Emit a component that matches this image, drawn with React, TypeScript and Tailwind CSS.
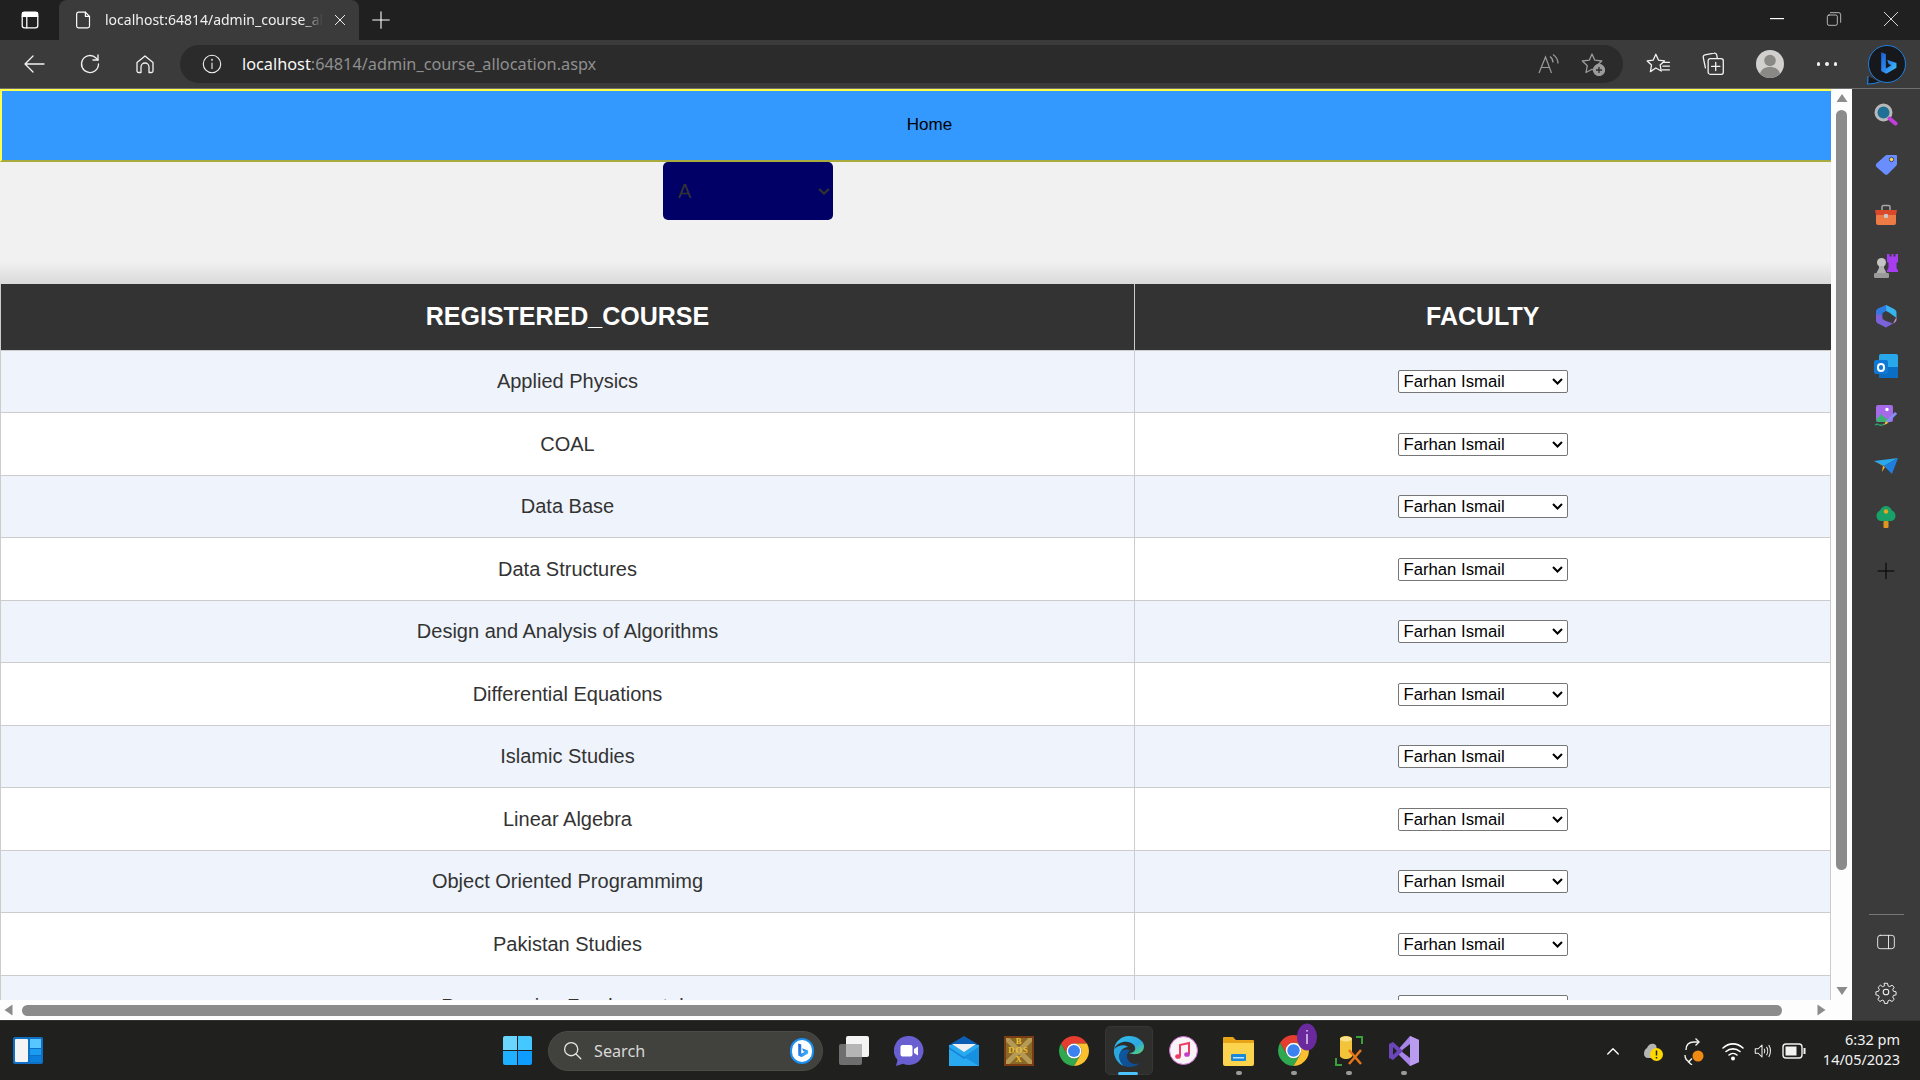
import React from "react";

const UI = "font-['Noto_Sans','Open_Sans',sans-serif]";
const ARIAL = "font-['Liberation_Sans',Arial,sans-serif]";

const courses = [
  "Applied Physics",
  "COAL",
  "Data Base",
  "Data Structures",
  "Design and Analysis of Algorithms",
  "Differential Equations",
  "Islamic Studies",
  "Linear Algebra",
  "Object Oriented Programmimg",
  "Pakistan Studies",
  "Programming Fundamentals",
];

function Line({ size = 24, sw = 1.3, className = "", children }: { size?: number; sw?: number; className?: string; children: React.ReactNode }) {
  return (
    <svg width={size} height={size} viewBox="0 0 24 24" fill="none" stroke="currentColor" strokeWidth={sw} strokeLinecap="round" strokeLinejoin="round" className={className}>
      {children}
    </svg>
  );
}

function BingB({ id, size = 24 }: { id: string; size?: number }) {
  return (
    <svg width={size} height={size} viewBox="0 0 24 24">
      <defs>
        <linearGradient id={id} x1="0" y1="0" x2="1" y2="1">
          <stop offset="0" stopColor="#1b5fd8" />
          <stop offset="0.55" stopColor="#2f8cf0" />
          <stop offset="1" stopColor="#3fd0f8" />
        </linearGradient>
      </defs>
      <path d="M7 2l4 1.400v12.400l4.800-2.700-2.300-1.100-1.400-3.600 8 2.800v4l-8.700 5.200-4.400-2.500z" fill={`url(#${id})`} />
    </svg>
  );
}

function ChromeLogo({ size = 30 }: { size?: number }) {
  return (
    <svg width={size} height={size} viewBox="4 4 40 40">
      <path d="M6.68 14A20 20 0 0 1 41.32 14H24A10 10 0 0 0 15.34 29z" fill="#e53e30" />
      <path d="M6.68 14L15.34 29A10 10 0 0 0 32.66 29L24 44A20 20 0 0 1 6.68 14z" fill="#2fa84f" />
      <path d="M24 44L32.66 29A10 10 0 0 0 24 14H41.32A20 20 0 0 1 24 44z" fill="#fbc02d" />
      <circle cx="24" cy="24" r="10" fill="#fff" />
      <circle cx="24" cy="24" r="8" fill="#3b82f0" />
    </svg>
  );
}

function EdgeLogo() {
  return (
    <svg width="32" height="32" viewBox="0 0 32 32">
      <defs>
        <linearGradient id="edgeA" x1="0" y1="0" x2="1" y2="1">
          <stop offset="0" stopColor="#35c1f1" />
          <stop offset="0.6" stopColor="#2aa9e0" />
          <stop offset="1" stopColor="#5fd76b" />
        </linearGradient>
        <linearGradient id="edgeB" x1="0" y1="0" x2="1" y2="1">
          <stop offset="0" stopColor="#0c59a4" />
          <stop offset="1" stopColor="#114a8b" />
        </linearGradient>
      </defs>
      <path d="M16 1C8 1 2 7 1 14c3-6 9-8 14-7 6 1 8 5 7 8-1 2-3 3-6 3 2 1 7 2 11 0 3-2 4-4 4-7C31 6 24 1 16 1z" fill="url(#edgeA)" />
      <path d="M1 14c-1 8 4 15 10 17 -5-4-6-11-3-15 2-3 5-4 7-4-3-3-10-2-14 2z" fill="#2aa7e0" />
      <path d="M8 16c-3 4-2 11 3 15 5 2 12 1 16-3-4 2-10 1-12-3-2-3-1-7 2-10-4-1-7 0-9 1z" fill="url(#edgeB)" />
    </svg>
  );
}

function NavBtn({ children }: { children: React.ReactNode }) {
  return <div className="w-[55px] h-full flex items-center justify-center text-[#f2f2f2]">{children}</div>;
}

function TabStrip() {
  return (
    <div className={`h-[40px] bg-[#202020] flex items-end text-white ${UI}`}>
      <div className="w-[59px] h-full flex items-center justify-center">
        <Line size={22} sw={1.4}>
          <rect x="3.5" y="3.5" width="17" height="17" rx="2.5" />
          <path d="M3.5 8h17M8.500 8v12.500" />
          <path d="M4 4h16v4H4z" fill="currentColor" />
        </Line>
      </div>
      <div className="w-[300px] h-full bg-[#3b3b3b] rounded-t-[8px] flex items-center">
        <div className="w-[46px] flex justify-center pl-[4px]">
          <Line size={22} sw={1.3}>
            <path d="M6 3.5h7.5l4.5 4.5v10.5a2 2 0 0 1-2 2H6a2 2 0 0 1-2-2V5.500a2 2 0 0 1 2-2z" />
            <path d="M13.500 3.500V8H18" />
          </Line>
        </div>
        <div className="w-[218px] overflow-hidden whitespace-nowrap text-[14px] text-[#f0f0f0] leading-[20px] [mask-image:linear-gradient(to_right,#000_90%,transparent_100%)]">
          localhost:64814/admin_course_allocation.aspx
        </div>
        <div className="flex-1 flex justify-center pr-[2px]">
          <Line size={16} sw={1.4}>
            <path d="M5 5l14 14M19 5L5 19" />
          </Line>
        </div>
      </div>
      <div className="w-[44px] h-full flex items-center justify-center">
        <Line size={22} sw={1.2}>
          <path d="M12 3v18M3 12h18" />
        </Line>
      </div>
      <div className="ml-auto h-full flex text-white">
        <div className="w-[57px] flex items-center justify-center pb-[2px]">
          <svg width="14" height="2"><rect width="14" height="1.200" fill="currentColor" /></svg>
        </div>
        <div className="w-[57px] flex items-center justify-center pb-[2px]">
          <Line size={16} sw={1}>
            <rect x="2" y="6" width="15" height="15.500" rx="2.500" />
            <path d="M6.500 2.500H19a3 3 0 0 1 3 3V17" />
          </Line>
        </div>
        <div className="w-[58px] flex items-center justify-center pb-[2px]">
          <Line size={18} sw={1.1}>
            <path d="M3 3l18 18M21 3L3 21" />
          </Line>
        </div>
      </div>
    </div>
  );
}

function Toolbar() {
  return (
    <div className={`h-[48px] bg-[#3b3b3b] flex items-center pl-[7px] ${UI}`}>
      <NavBtn>
        <Line size={24} sw={1.300}>
          <path d="M21 12H2M10 4l-8 8 8 8" />
        </Line>
      </NavBtn>
      <NavBtn>
        <Line size={24} sw={1.300}>
          <path d="M20.500 12a8.500 8.500 0 1 1-2.500-6l2 2" />
          <path d="M20 3v5h-5" />
        </Line>
      </NavBtn>
      <NavBtn>
        <Line size={24} sw={1.300}>
          <path d="M4 10.500L12 4l8 6.500V19a1.500 1.500 0 0 1-1.500 1.500H16V15a4 4 0 0 0-8 0v5.500H5.500A1.500 1.500 0 0 1 4 19z" />
        </Line>
      </NavBtn>
      <div className="ml-[8px] w-[1443px] h-[38px] rounded-[19px] bg-[#2b2b2b] flex items-center">
        <div className="w-[64px] mr-[-2px] flex justify-center text-[#f2f2f2]">
          <Line size={22} sw={1.200}>
            <circle cx="12" cy="12" r="9.500" />
            <path d="M12 11v6" />
            <path d="M12 7.300v.4" strokeWidth="1.800" />
          </Line>
        </div>
        <div className="text-[16.300px] leading-[20px] whitespace-nowrap text-[#f7f7f7]">
          localhost<span className="text-[#8f8f8f]">:64814/admin_course_allocation.aspx</span>
        </div>
        <div className="ml-auto flex items-center text-[#9b9b9b] pr-[8px]">
          <div className="w-[45px] flex justify-center">
            <svg width="22" height="22" viewBox="0 0 22 22" fill="none" stroke="currentColor" strokeWidth="1.200">
              <path d="M2 20L8.500 4l6 16M4.500 14.500h8" />
              <path d="M13 3.500c2 1.500 3 3.500 3 6M16 1.500c3 2 5 5 5 9" />
            </svg>
          </div>
          <div className="w-[45px] flex justify-center">
            <svg width="24" height="24" viewBox="0 0 24 24" fill="none" stroke="currentColor" strokeWidth="1.300">
              <path d="M11 2l2.800 6.200 7 .8-5 4.700 1.300 6.800L11 17.200 5 20.500l1.300-6.800-5-4.700 7-.8z" strokeLinejoin="round" />
              <circle cx="18" cy="18" r="5.500" fill="#9b9b9b" />
              <path d="M18 15v6M15 18h6" stroke="#2b2b2b" strokeWidth="1.300" />
            </svg>
          </div>
        </div>
      </div>
      <div className="flex items-center text-[#f2f2f2] ml-[7px]">
        <div className="w-[56px] flex justify-center">
          <Line size={26} sw={1.200}>
            <path d="M10 3l2.500 5.500 5.500.7-4 3.800 1 5.500-5-2.800-5 3.300 1-6-4-3.800 5.500-.7z" />
            <path d="M17 10.500h5.500M16.500 14h6M16 17.500h6.500" />
          </Line>
        </div>
        <div className="w-[54px] flex justify-center">
          <Line size={26} sw={1.200}>
            <path d="M5 15.500L3 6a2 2 0 0 1 1.500-2.400L13 2a2 2 0 0 1 2.400 1.500l.6 3" />
            <rect x="7.500" y="7" width="14" height="14.500" rx="2" />
            <path d="M14.500 10.500v7.500M10.700 14.200h7.600" />
          </Line>
        </div>
        <div className="w-[60px] flex justify-center">
          <svg width="28" height="28" viewBox="0 0 28 28">
            <circle cx="14" cy="14" r="14" fill="#d2d0ce" />
            <circle cx="14" cy="10.500" r="5.800" fill="#8b8986" />
            <path d="M4 23.500c1.500-4.500 5-6.500 10-6.500s8.500 2 10 6.500A14 14 0 0 1 14 28a14 14 0 0 1-10-4.500z" fill="#8b8986" />
          </svg>
        </div>
        <div className="w-[54px] flex justify-center gap-[5px]">
          <span className="w-[3.500px] h-[3.500px] rounded-full bg-[#f2f2f2]" />
          <span className="w-[3.500px] h-[3.500px] rounded-full bg-[#f2f2f2]" />
          <span className="w-[3.500px] h-[3.500px] rounded-full bg-[#f2f2f2]" />
        </div>
        <div className="w-[66px] flex justify-center">
          <div className="relative w-[38px] h-[38px] rounded-full bg-[#16181c] border-[1.500px] border-[#1f7fe0] flex items-center justify-center">
            <BingB id="bingTop" size={28} />
            <svg className="absolute left-[-2px] bottom-[-3px]" width="14" height="10" viewBox="0 0 14 10">
              <path d="M1 1c0 3 0 5-.5 8 4 0 8-.5 12-2" fill="#16181c" stroke="#1f7fe0" strokeWidth="1.200" />
            </svg>
          </div>
        </div>
      </div>
    </div>
  );
}

function Row({ name, alt }: { name: string; alt: boolean }) {
  return (
    <tr className={alt ? "bg-[#eff3fb]" : "bg-white"}>
      <td className="h-[62.500px] border border-[#cccccc] text-center text-[20px] text-[#333333] p-0">{name}</td>
      <td className="h-[62.500px] border border-[#cccccc] text-center p-0">
        <div className="relative inline-block w-[170px] h-[23px] align-middle">
          <select className="block w-full h-full appearance-none bg-white text-black text-[16.700px] leading-[21px] border border-[#767676] rounded-[2px] pl-[5px]" defaultValue="Farhan Ismail">
            <option>Farhan Ismail</option>
          </select>
          <svg className="absolute right-[5px] top-[8px] pointer-events-none" width="11" height="7" viewBox="0 0 11 7">
            <path d="M1 1l4.500 4.500L10 1" fill="none" stroke="#000" strokeWidth="2" />
          </svg>
        </div>
      </td>
    </tr>
  );
}

function PageArea() {
  return (
    <div className={`flex-1 min-w-0 overflow-hidden bg-[#f1f1f1] ${ARIAL}`}>
      <div className="w-[1831px] h-[73px] box-border bg-[#3399ff] border-t-2 border-l-2 border-b-2 border-t-[#ffff4d] border-l-[#ffff4d] border-b-[#a9ab3f] flex items-center justify-center pl-[26px] text-[17px] text-black">
        <span className="pb-[2px]">Home</span>
      </div>
      <div className="h-[122px] pl-[663px] bg-[linear-gradient(to_bottom,#f1f1f1_82%,#d9d9d9_100%)]">
        <div className="relative w-[170px] h-[58px]">
          <select className="block w-full h-full appearance-none rounded-[5px] bg-[#000066] text-[#333333] text-[20px] pl-[15px] border-0" defaultValue="A">
            <option>A</option>
          </select>
          <svg className="absolute right-[3px] top-[26px] pointer-events-none" width="12" height="7" viewBox="0 0 12 7">
            <path d="M1 1l5 4.500L11 1" fill="none" stroke="#333333" strokeWidth="2.200" />
          </svg>
        </div>
      </div>
      <table className="w-[1831px] table-fixed border-collapse">
        <colgroup>
          <col className="w-[1134px]" />
          <col />
        </colgroup>
        <thead>
          <tr className="bg-[#333333] text-white">
            <th className="h-[66px] border-l border-r border-[#cccccc] border-y-0 text-[25px] font-bold text-center p-0">REGISTERED_COURSE</th>
            <th className="h-[66px] border-l border-[#cccccc] text-[25px] font-bold text-center p-0">FACULTY</th>
          </tr>
        </thead>
        <tbody>
          {courses.map((c, i) => (
            <Row key={c} name={c} alt={i % 2 === 0} />
          ))}
        </tbody>
      </table>
    </div>
  );
}

function VScroll() {
  return (
    <div className="w-[21px] bg-[#fdfdfd] flex flex-col items-center shrink-0">
      <svg className="mt-[4px] mb-[7px]" width="12" height="10" viewBox="0 0 12 10"><path d="M6 1l5.500 8H.500z" fill="#8b8b8b" /></svg>
      <div className="w-[11px] h-[760px] rounded-full bg-[#8b8b8b]" />
      <svg className="mt-auto mb-[4px]" width="12" height="10" viewBox="0 0 12 10"><path d="M.500 1h11L6 9z" fill="#8b8b8b" /></svg>
    </div>
  );
}

function HScroll() {
  return (
    <div className="h-[20px] bg-[#fdfdfd] flex items-center shrink-0">
      <svg className="ml-[4px] mr-[9px]" width="9" height="12" viewBox="0 0 9 12"><path d="M8.500 .5v11L.5 6z" fill="#8b8b8b" /></svg>
      <div className="w-[1760px] h-[11px] rounded-full bg-[#8b8b8b]" />
      <svg className="ml-[35px]" width="9" height="12" viewBox="0 0 9 12"><path d="M.5 .5v11l8-5.500z" fill="#8b8b8b" /></svg>
    </div>
  );
}

function SideItem({ children, extra }: { children: React.ReactNode; extra?: boolean }) {
  return <div className={`${extra ? "h-[58px]" : "h-[50.200px]"} flex items-center justify-center`}>{children}</div>;
}

function Sidebar() {
  return (
    <div className="w-[68px] bg-[#3b3b3b] flex flex-col shrink-0 pt-[1px]">
      <SideItem>
        <svg width="24" height="24" viewBox="0 0 24 24">
          <circle cx="9.500" cy="9.500" r="7.500" fill="#1f6f96" stroke="#b8b8b8" strokeWidth="3" />
          <path d="M15.500 15.500l6 5" stroke="#c23fdc" strokeWidth="4" strokeLinecap="round" />
        </svg>
      </SideItem>
      <SideItem>
        <svg width="24" height="24" viewBox="0 0 24 24">
          <path d="M13 2h9a1 1 0 0 1 1 1v8a3 3 0 0 1-1 2l-8 8a2.500 2.500 0 0 1-3.500 0l-8-7a2.500 2.500 0 0 1 0-3.500L11 3a3 3 0 0 1 2-1z" fill="#6a8dff" />
          <circle cx="17.500" cy="6.500" r="2.200" fill="#ffd83b" stroke="#33418f" strokeWidth="1" />
        </svg>
      </SideItem>
      <SideItem>
        <svg width="24" height="24" viewBox="0 0 24 24">
          <path d="M8 7V4a1.500 1.500 0 0 1 1.500-1.500h5A1.500 1.500 0 0 1 16 4v3" fill="none" stroke="#a8a8a8" strokeWidth="1.500" />
          <path d="M1 7h22l-1 5H2z" fill="#d9492a" />
          <path d="M2 12h20v8a2 2 0 0 1-2 2H4a2 2 0 0 1-2-2z" fill="#ee7a45" />
          <rect x="10" y="11" width="4" height="4" rx="1" fill="#c9c9c9" />
        </svg>
      </SideItem>
      <SideItem>
        <svg width="24" height="24" viewBox="0 0 24 24">
          <path d="M13 0h2.500v2.500h2V0h2v2.500h2V0H24v8l-1.500 1v5l1.500 2.500V18H13v-1.500l1.500-2.500V9L13 8z" fill="#a63ef0" />
          <circle cx="7.500" cy="8.500" r="4.500" fill="#c4c4c4" />
          <path d="M5 12h5v2l2.500 5h-10L5 14z" fill="#b0b0b0" />
          <rect x="0" y="19" width="15" height="5" rx="1.200" fill="#9a9a9a" />
        </svg>
      </SideItem>
      <SideItem>
        <svg width="24" height="24" viewBox="0 0 24 24">
          <path d="M12 1l8.500 4.500-8 1.500L8 12H2V7.500C2 6 3 5 4 4.500z" fill="#2f79e0" />
          <path d="M12 1l8 4c1.500 .8 2.500 2 2.500 3.500V14l-6-4.500-4 .5z" fill="#35b4ee" />
          <path d="M2 10v6.500C2 18 3 19 4 19.500l8 4 7-4-7-2.500-3-4-1-2z" fill="#7c62d8" />
          <path d="M22.500 13l-3.500 6.500-7 4 8-4.500c1.500-.8 2.500-2 2.500-3.500z" fill="#c58fe0" />
          <path d="M8.500 9l3.500-2 4 2v5l-4 3-3.500-2z" fill="#3b3b3b" />
        </svg>
      </SideItem>
      <SideItem>
        <div className="relative w-[24px] h-[24px]">
          <div className="absolute right-0 top-0 w-[19px] h-[24px] bg-[#28a8ea] rounded-[2px]" />
          <div className="absolute right-0 bottom-0 w-[19px] h-[11px] bg-[#0a6fc4] rounded-b-[2px]" />
          <div className="absolute left-0 top-[6px] w-[14px] h-[14px] bg-[#0f78d4] rounded-[2px] flex items-center justify-center">
            <span className="w-[8px] h-[9px] rounded-full border-2 border-white" />
          </div>
        </div>
      </SideItem>
      <SideItem>
        <svg width="24" height="24" viewBox="0 0 24 24">
          <rect x="2" y="1" width="17" height="17" rx="2" fill="#a56ae8" />
          <path d="M2 16l5-6 4 4 3 1v3H4z" fill="#3bb273" />
          <circle cx="13" cy="5.500" r="1.700" fill="#fff" />
          <path d="M1 21c2-1.500 3-1 4.500 0s3 0 5-1" fill="none" stroke="#2e9e6a" strokeWidth="1.500" />
          <path d="M12 17l9-9 2.200 1.800-9 9z" fill="#8a8cf5" />
          <path d="M10 21l2-4 2.200 2z" fill="#f7c23c" />
        </svg>
      </SideItem>
      <SideItem>
        <svg width="24" height="24" viewBox="0 0 24 24">
          <path d="M0 7L24 4 10 12z" fill="#29a8ee" />
          <path d="M24 4L10 12l8 8z" fill="#1f7fe0" />
          <path d="M0 7l9 4.500L8 18l3-5z" fill="#f5b427" />
        </svg>
      </SideItem>
      <SideItem>
        <svg width="24" height="24" viewBox="0 0 24 24">
          <path d="M12 1c3 0 5 2 6 4.500 2.500 1 3.500 3 3.500 5.500 0 3-2.500 5-5 5h-9c-2.500 0-5-2-5-5 0-2.500 1-4.500 3.500-5.500C7 3 9 1 12 1z" fill="#18a068" />
          <rect x="9.500" y="16" width="5" height="7" rx="1" fill="#e0951f" />
          <circle cx="12" cy="6.500" r="2.200" fill="#e9a61e" />
        </svg>
      </SideItem>
      <SideItem extra>
        <Line size={20} sw={1.200}>
          <path d="M12 2.500v19M2.500 12h19" />
        </Line>
      </SideItem>
      <div className="mt-auto flex flex-col items-center text-[#f0f0f0] pb-[3px]">
        <div className="w-[35px] h-[1px] bg-[#777777] mb-[2px]" />
        <div className="h-[50px] flex items-center justify-center">
          <Line size={20} sw={1.100}>
            <rect x="2" y="4" width="20" height="16" rx="3" />
            <path d="M15 4v16" />
          </Line>
        </div>
        <div className="h-[50px] flex items-center justify-center">
          <Line size={24} sw={1.100}>
            <circle cx="12" cy="12" r="2.800" />
            <path d="M10.300 2.300h3.400l.6 2.900 1.900.8 2.500-1.600 2.400 2.400-1.600 2.500.8 1.900 2.900.6v3.400l-2.900.6-.8 1.900 1.600 2.500-2.400 2.400-2.500-1.600-1.900.8-.6 2.900h-3.400l-.6-2.900-1.900-.8-2.500 1.600-2.400-2.400 1.600-2.500-.8-1.900-2.900-.6v-3.400l2.900-.6.8-1.900L3.300 6.800l2.400-2.400 2.500 1.600 1.900-.8z" transform="translate(1.200 1.200) scale(.9)" />
          </Line>
        </div>
      </div>
    </div>
  );
}

function TaskItem({ children, active, dot }: { children: React.ReactNode; active?: boolean; dot?: boolean }) {
  return (
    <div className="relative w-[55px] h-[60px] flex items-center justify-center shrink-0">
      {active && <div className="absolute left-[3.500px] top-[5px] w-[48px] h-[49px] rounded-[5px] bg-[#2e2e2c] border border-[#363634]" />}
      <div className="relative flex">{children}</div>
      {active && <div className="absolute left-[17px] top-[51px] w-[20px] h-[3px] rounded-full bg-[#4cc2ff]" />}
      {dot && <div className="absolute left-[25px] top-[50px] w-[6px] h-[4px] rounded-full bg-[#9a9a9a]" />}
    </div>
  );
}

function Taskbar() {
  return (
    <div className={`h-[60px] bg-[#20201e] border-t border-[#333331] flex items-center shrink-0 ${UI}`}>
      <div className="ml-[13px] w-[30px] h-[27px] rounded-[2px] bg-[#0f6fc4] flex gap-[2px] p-[2px] shrink-0">
        <div className="w-[13px] bg-[#f4f4f4] rounded-[1px]" />
        <div className="flex-1 flex flex-col gap-[1px]">
          <div className="flex-1 bg-[#58c6ff]" />
          <div className="h-[6px] bg-[#1a9df0]" />
          <div className="h-[6px] bg-[#0a80dc]" />
        </div>
      </div>
      <div className="ml-[447px] w-[55px] flex justify-center shrink-0">
        <div className="w-[29px] h-[29px] grid grid-cols-2 gap-[1px]">
          <div className="bg-[#6ad6ff] rounded-tl-[2px]" />
          <div className="bg-[#45c8ff] rounded-tr-[2px]" />
          <div className="bg-[#1fb0ff] rounded-bl-[2px]" />
          <div className="bg-[#0f9cff] rounded-br-[2px]" />
        </div>
      </div>
      <div className="ml-[3px] w-[275px] h-[40px] rounded-[20px] bg-[#41413d] border border-[#4b4b47] flex items-center shrink-0">
        <div className="ml-[13px] text-[#e6e6e6]">
          <Line size={21} sw={1.500}>
            <circle cx="10.500" cy="10.500" r="7.500" />
            <path d="M16 16l5.500 5.500" />
          </Line>
        </div>
        <span className="ml-[11px] text-[16.200px] text-[#d8d8d8] leading-[20px]">Search</span>
        <div className="ml-auto mr-[-1px] relative w-[24px] h-[26px] rounded-full bg-white border-2 border-[#1a8ff0] flex items-center justify-center">
          <BingB id="bingTask" size={18} />
        </div>
        <div className="w-[9px]" />
      </div>
      <div className="ml-[3px] flex items-center shrink-0">
        <TaskItem>
          <div className="relative w-[30px] h-[29px]">
            <div className="absolute left-0 bottom-0 w-[23px] h-[21px] rounded-[2px] bg-[#6e6e6e]" />
            <div className="absolute right-0 top-0 w-[23px] h-[21px] rounded-[2px] bg-[#f4f4f4]" />
            <div className="absolute left-[7px] top-[8px] w-[16px] h-[13px] bg-[#b5b5b5]" />
          </div>
        </TaskItem>
        <TaskItem>
          <svg width="30" height="30" viewBox="0 0 30 30">
            <path d="M15 0a14.500 14.500 0 1 1-6 27.700L2 30l1.500-6A14.500 14.500 0 0 1 15 0z" fill="#6a5fd0" />
            <rect x="6.500" y="9" width="12" height="11.500" rx="2" fill="#fff" />
            <path d="M20 13l4-2.500v9L20 17z" fill="#fff" />
          </svg>
        </TaskItem>
        <TaskItem>
          <svg width="30" height="30" viewBox="0 0 30 30">
            <path d="M15 0l15 9v2H0V9z" fill="#0a5fb4" />
            <path d="M0 9h30v21H0z" fill="#29aaf0" />
            <path d="M3 8h24l-12 8z" fill="#f0f0f0" />
            <path d="M0 11l15 10 15-10v2L15 23 0 13z" fill="#1583d8" />
            <path d="M15 21l15 9V11z" fill="#1690e0" />
          </svg>
        </TaskItem>
        <TaskItem>
          <div className="relative w-[30px] h-[30px] bg-[#8a6a2a] border-2 border-[#7a3d13] overflow-hidden">
            <svg className="absolute inset-0" width="26" height="26" viewBox="0 0 26 26">
              <path d="M0 0l26 26M26 0L0 26" stroke="#b59a55" strokeWidth="5" />
            </svg>
            <div className="absolute inset-0 flex flex-col items-center justify-center text-[#f2c230] text-[8.500px] font-bold leading-[9px] font-['Liberation_Serif',serif]">
              <span>B</span>
              <span className="tracking-[1px]">DOS</span>
              <span>X</span>
            </div>
          </div>
        </TaskItem>
        <TaskItem>
          <ChromeLogo />
        </TaskItem>
        <TaskItem active>
          <EdgeLogo />
        </TaskItem>
        <TaskItem>
          <svg width="29" height="29" viewBox="0 0 29 29">
            <circle cx="14.500" cy="14.500" r="14" fill="#f8f4f8" stroke="#d06ad0" strokeWidth="1" />
            <path d="M11 20V9l9-2v11" fill="none" stroke="#ee3b63" strokeWidth="2" />
            <ellipse cx="9" cy="20.500" rx="2.800" ry="2.300" fill="#ee3b63" />
            <ellipse cx="18" cy="18.500" rx="2.800" ry="2.300" fill="#c23ec8" />
          </svg>
        </TaskItem>
        <TaskItem dot>
          <svg width="31" height="30" viewBox="0 0 31 30">
            <path d="M0 2a1 1 0 0 1 1-1h9l3 3h17a1 1 0 0 1 1 1v3H0z" fill="#e8a317" />
            <path d="M0 7h31v21a2 2 0 0 1-2 2H2a2 2 0 0 1-2-2z" fill="#fcd34d" />
            <rect x="8" y="18" width="15" height="7" rx="1" fill="#1a88d8" />
            <rect x="10" y="21" width="11" height="1.500" fill="#bfe3fb" />
          </svg>
        </TaskItem>
        <TaskItem dot>
          <div className="relative">
            <ChromeLogo size={31} />
            <svg className="absolute right-[-8px] top-[-12px]" width="20" height="28" viewBox="0 0 20 28">
              <ellipse cx="10" cy="14" rx="10" ry="13.500" fill="#6a2a9e" />
              <rect x="9.200" y="7" width="1.600" height="1.600" fill="#d9c4ea" />
              <rect x="9.200" y="11" width="1.600" height="10" fill="#d9c4ea" />
            </svg>
          </div>
        </TaskItem>
        <TaskItem dot>
          <svg width="28" height="30" viewBox="0 0 28 30">
            <path d="M1 22v7h6M21 1h6v7" fill="none" stroke="#3aa13a" strokeWidth="2" />
            <path d="M5 3c0-1.700 3-3 6-3s6 1.300 6 3v17c0 1.500-3 3-6 3s-6-1.500-6-3z" fill="#f2c43a" />
            <ellipse cx="11" cy="3" rx="6" ry="2.500" fill="#f9e08a" />
            <path d="M14 28l12-14M26 28L14 14" stroke="#e8751a" strokeWidth="2.500" />
          </svg>
        </TaskItem>
        <TaskItem dot>
          <svg width="30" height="30" viewBox="0 0 30 30">
            <path d="M21 0l9 4v22l-9 4L7 16z" fill="#a883e8" />
            <path d="M21 0v30l9-4V4z" fill="#b99bf0" />
            <path d="M21 8L12 15l9 7z" fill="#20201e" />
            <path d="M0 8l4-2 10 9-10 9-4-2z" fill="#6b46b8" />
            <path d="M4 11v8l4-4z" fill="#20201e" />
          </svg>
        </TaskItem>
      </div>
      <div className="ml-auto flex items-center h-full text-white shrink-0">
        <div className="w-[30px] flex justify-center">
          <Line size={18} sw={1.800}>
            <path d="M5 16l7-7 7 7" />
          </Line>
        </div>
        <div className="ml-[5px] w-[40px] flex justify-center">
          <svg width="24" height="24" viewBox="0 0 24 24">
            <path d="M3 15c0-3 1-5 3-6 1-3 4-5 7-4 1 .4 2 1 2.500 2.500V19H7c-2.500 0-4-2-4-4z" fill="#b5b5b5" />
            <circle cx="15.500" cy="15.500" r="6.500" fill="#ffd800" />
            <path d="M15.500 11.500v5" stroke="#222" strokeWidth="1.500" />
            <path d="M15.500 18v1.500" stroke="#222" strokeWidth="1.500" />
          </svg>
        </div>
        <div className="w-[40px] flex justify-center">
          <svg width="24" height="28" viewBox="0 0 24 28" fill="none" stroke="#f2f2f2" strokeWidth="1.400">
            <path d="M5 13c0-5 3-8 8-8h4" />
            <path d="M14.500 1.500L18 5l-3.500 3.500" />
            <path d="M4 18c0 3 1.500 6 5 7" />
            <path d="M11 21.500L7.500 25 11 28" />
            <circle cx="17" cy="19" r="5.500" fill="#f08a12" stroke="none" />
          </svg>
        </div>
        <div className="w-[40px] flex justify-center">
          <Line size={24} sw={1.600}>
            <path d="M2 9c6-5.500 14-5.500 20 0M5 12.500c4-3.500 10-3.500 14 0M8 16c2.300-2 5.700-2 8 0" />
            <circle cx="12" cy="19.500" r="1.200" fill="currentColor" />
          </Line>
        </div>
        <div className="w-[18px] flex justify-center">
          <svg width="24" height="24" viewBox="0 0 24 24" fill="none" stroke="#f2f2f2" strokeWidth="1.400" strokeLinejoin="round">
            <path d="M3 9h4l5-5v16l-5-5H3z" />
            <path d="M15 9c1 2 1 4 0 6M18 6.500c2 3 2 8 0 11M21 4c3 4.500 3 11.500 0 16" />
          </svg>
        </div>
        <div className="ml-[11px] w-[24px] flex justify-center">
          <svg width="24" height="18" viewBox="0 0 24 18" fill="none" stroke="#f2f2f2" strokeWidth="1.400">
            <rect x="1" y="2" width="19" height="14" rx="3" />
            <rect x="3.500" y="4.500" width="11" height="9" fill="#f2f2f2" stroke="none" />
            <path d="M22.500 6v6" strokeWidth="2" />
          </svg>
        </div>
        <div className="ml-[17px] pr-[20px] pb-[3px] flex flex-col items-end text-[14.500px] leading-[20px] text-[#f2f2f2] whitespace-nowrap">
          <span>6:32 pm</span>
          <span>14/05/2023</span>
        </div>
      </div>
    </div>
  );
}

export default function App() {
  return (
    <div className="w-[1920px] h-[1080px] flex flex-col overflow-hidden bg-[#3b3b3b]">
      <TabStrip />
      <Toolbar />
      <div className="h-[1px] bg-[#6f6f6f] shrink-0" />
      <div className="flex-1 min-h-0 flex">
        <div className="flex-1 min-w-0 flex flex-col">
          <div className="flex-1 min-h-0 flex">
            <PageArea />
            <VScroll />
          </div>
          <HScroll />
        </div>
        <Sidebar />
      </div>
      <Taskbar />
    </div>
  );
}
